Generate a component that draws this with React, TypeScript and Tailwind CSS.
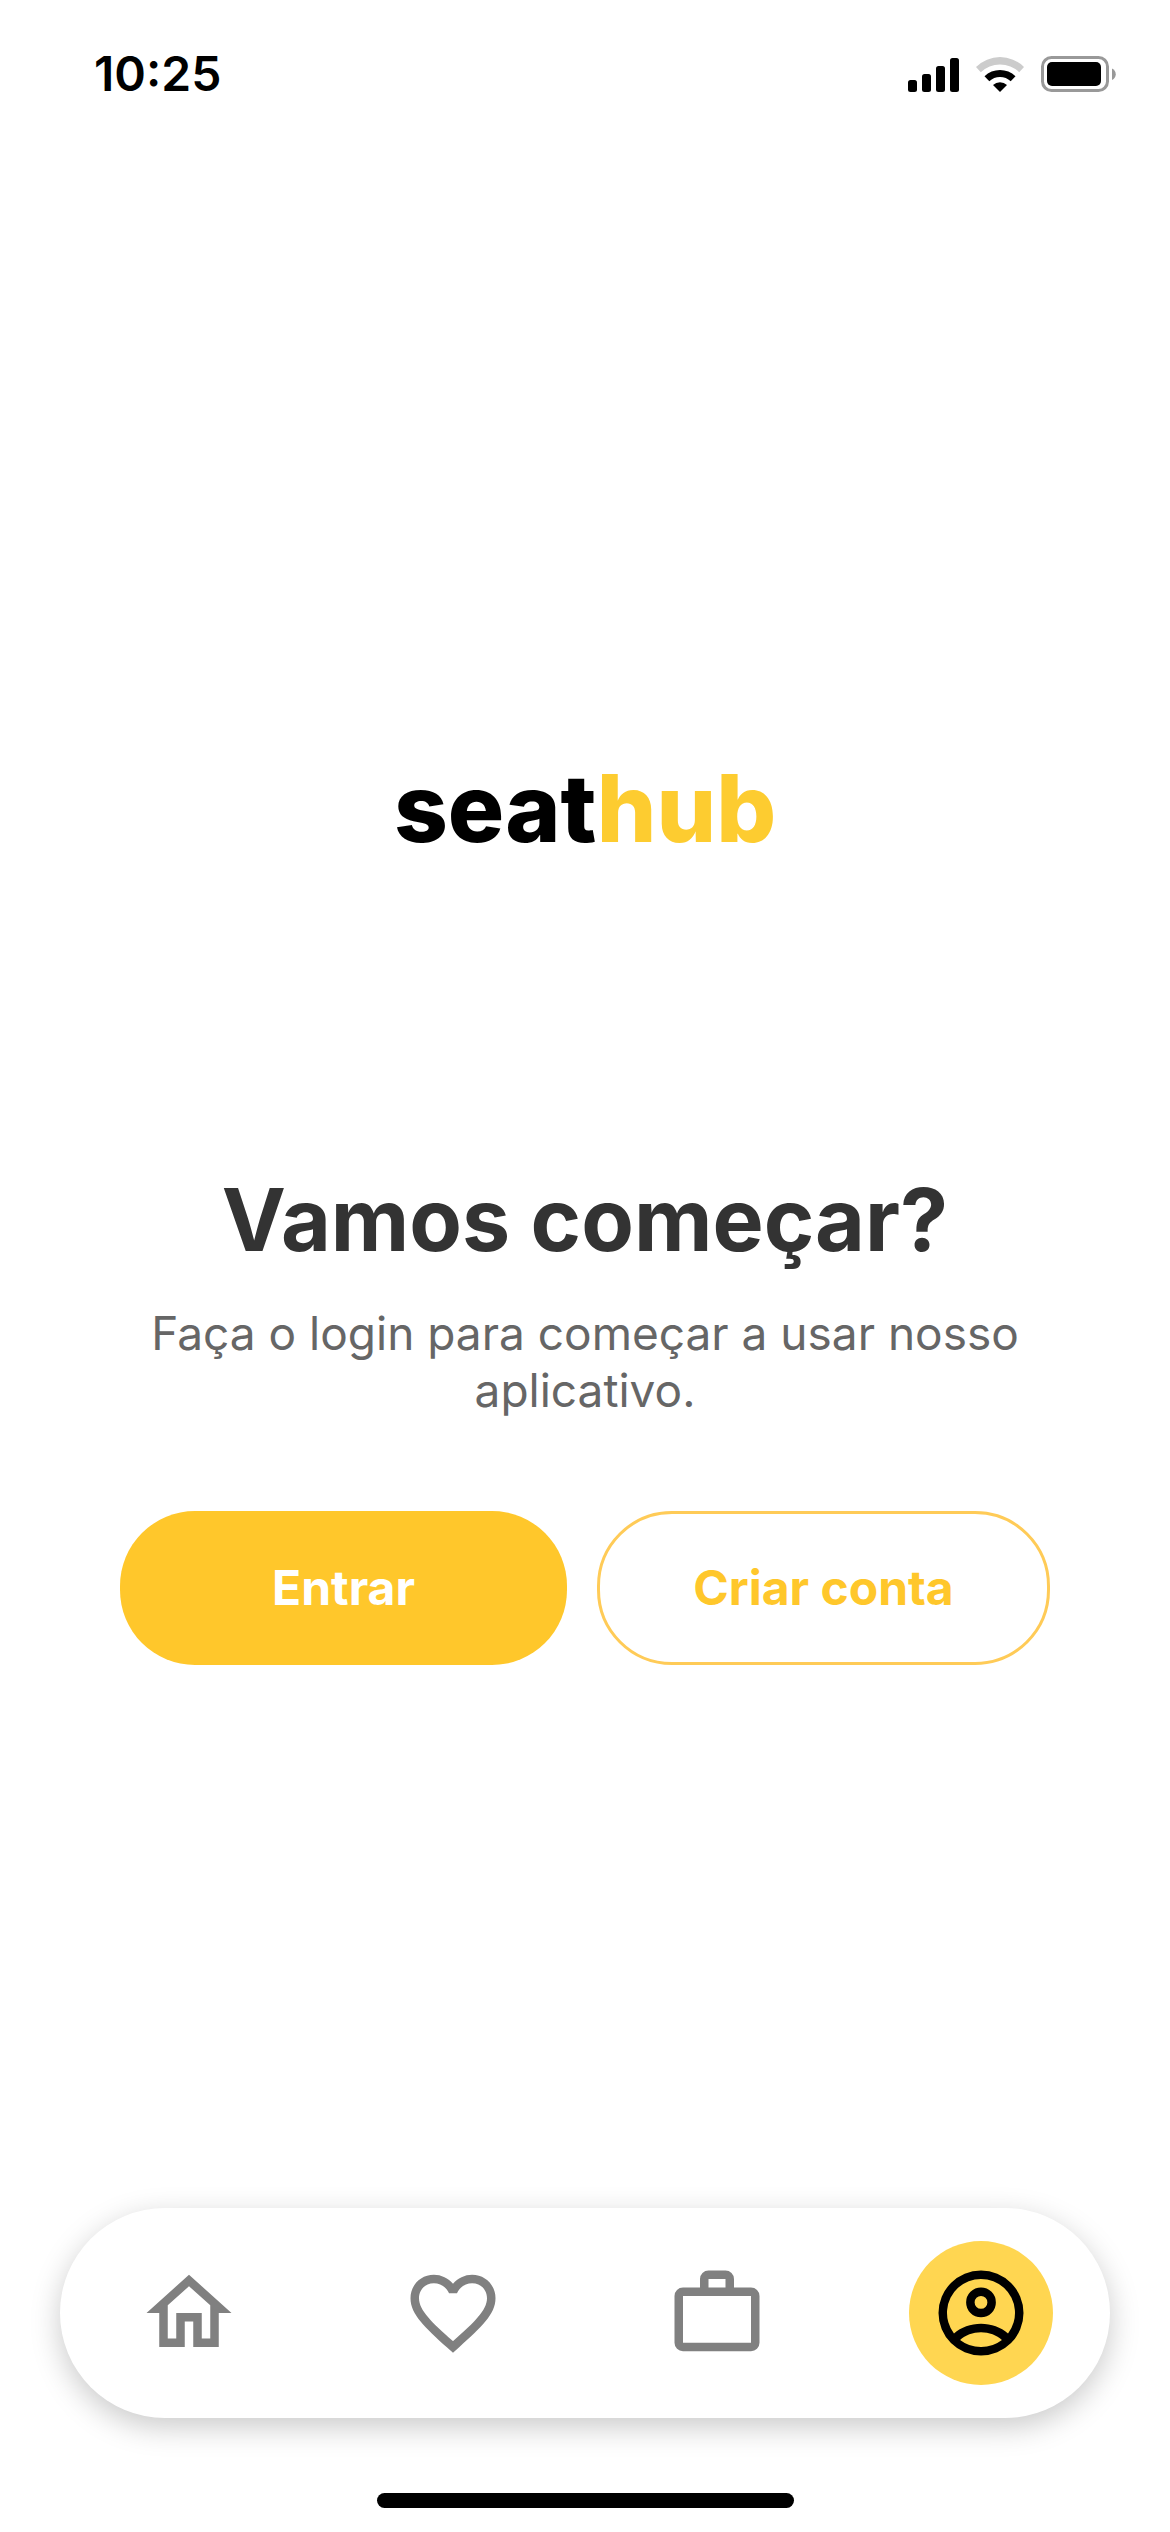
import React from "react";

const paths = {
  home: "M12 5.69l5 4.5V18h-2v-6H9v6H7v-7.81l5-4.5M12 3L2 12h3v8h6v-6h2v6h6v-8h3L12 3z",
  heart:
    "M16.5 3c-1.74 0-3.41.81-4.5 2.09C10.91 3.81 9.24 3 7.5 3 4.42 3 2 5.42 2 8.5c0 3.78 3.4 6.86 8.55 11.54L12 21.35l1.45-1.32C18.6 15.36 22 12.28 22 8.5 22 5.42 19.58 3 16.5 3zm-4.4 15.55l-.1.1-.1-.1C7.14 14.24 4 11.39 4 8.5 4 6.5 5.5 5 7.5 5c1.54 0 3.04.99 3.57 2.36h1.87C13.46 5.99 14.96 5 16.5 5c2 0 3.5 1.5 3.5 3.5 0 2.89-3.14 5.74-7.9 10.05z",
  bag: "M10 2h4a2 2 0 0 1 2 2v2h4a2 2 0 0 1 2 2v11a2 2 0 0 1-2 2H4a2 2 0 0 1-2-2V8a2 2 0 0 1 2-2h4V4a2 2 0 0 1 2-2zM4 8v11h16V8zM10 4v2h4V4z",
  account:
    "M12 2a10 10 0 1 0 0 20 10 10 0 0 0 0-20zM7.07 18.35C8.3 17.15 10.1 16.5 12 16.5s3.7.65 4.93 1.85A8 8 0 0 1 12 20a8 8 0 0 1-4.93-1.65zM18.36 16.83C16.7 15.3 14.4 14.5 12 14.5s-4.7.8-6.36 2.33A8 8 0 1 1 18.36 16.83zM12 6a3.5 3.5 0 1 0 0 7 3.5 3.5 0 0 0 0-7zm0 5a1.5 1.5 0 1 1 0-3 1.5 1.5 0 0 1 0 3z",
};

const tabs = [
  { label: "Início", icon: paths.home, active: false },
  { label: "Favoritos", icon: paths.heart, active: false },
  { label: "Reservas", icon: paths.bag, active: false },
  { label: "Perfil", icon: paths.account, active: true },
];

function StatusBar() {
  return (
    <header className="flex items-center justify-between pt-11 pr-[54px] pl-[94px]">
      <time className="text-[48px] leading-[60px] font-semibold text-black">10:25</time>
      <div className="flex items-center">
        <svg className="h-9 w-[51px]" viewBox="0 0 51 36" aria-label="Sinal">
          <rect x="0" y="24" width="9" height="12" rx="2.5" />
          <rect x="14" y="18" width="9" height="18" rx="2.5" />
          <rect x="28" y="10" width="9" height="26" rx="2.5" />
          <rect x="42" y="2" width="9" height="34" rx="2.5" />
        </svg>
        <svg className="ml-4 h-9 w-[50px]" viewBox="0 0 50 36" aria-label="Wi-Fi">
          <path d="M1 11a34 34 0 0 1 48 0l-4.8 5.2a27.5 27.5 0 0 0-38.4 0z" fill="#ccc" />
          <path d="M9.5 20.2a22.5 22.5 0 0 1 31 0l-4.8 5a15.6 15.6 0 0 0-21.4 0z" />
          <path d="M18 29a10.5 10.5 0 0 1 14 0l-7 7z" />
        </svg>
        <svg className="ml-4 h-9 w-[75px]" viewBox="0 0 75 36" aria-label="Bateria">
          <rect x="1.5" y="1.5" width="65" height="33" rx="9" fill="none" stroke="#999" strokeWidth="3" />
          <rect x="6" y="6" width="54" height="24" rx="5" />
          <path d="M71 12.5c5 2.5 5 9 0 11.5z" fill="#999" />
        </svg>
      </div>
    </header>
  );
}

function TabBar() {
  return (
    <nav className="mx-[60px] flex items-center justify-between rounded-full bg-white px-[57px] py-[33px] shadow-[0_9px_30px_rgba(0,0,0,0.21)]">
      {tabs.map((tab) => (
        <button
          key={tab.label}
          type="button"
          aria-label={tab.label}
          className={
            tab.active
              ? "flex size-36 items-center justify-center rounded-full bg-[#ffd651] text-black"
              : "flex size-36 items-center justify-center rounded-full text-[#808080]"
          }
        >
          <svg className="size-[102px]" viewBox="0 0 24 24" fill="currentColor" fillRule="evenodd" aria-hidden="true">
            <path d={tab.icon} />
          </svg>
        </button>
      ))}
    </nav>
  );
}

export default function App() {
  return (
    <div className="flex min-h-screen flex-col bg-white font-['Inter',sans-serif]">
      <StatusBar />
      <main className="flex flex-1 flex-col px-[120px] pt-[640px] text-center">
        <div className="text-[94px] leading-[128px] font-extrabold text-black">
          seat<span className="text-[#fdcc30]">hub</span>
        </div>
        <h1 className="mt-[294px] text-[86px] leading-[108px] font-bold text-[#333]">Vamos começar?</h1>
        <p className="mt-[31px] text-[46px] leading-[57px] text-[#666]">
          Faça o login para começar a usar nosso aplicativo.
        </p>
        <div className="mt-[92px] flex gap-[30px] text-[48px] leading-[58px] font-bold">
          <button type="button" className="flex-1 rounded-[75px] bg-[#ffc72b] px-10 py-12 text-white">
            Entrar
          </button>
          <button
            type="button"
            className="flex-1 rounded-[75px] border-3 border-[#ffcb57] px-10 py-[45px] text-[#ffc72b]"
          >
            Criar conta
          </button>
        </div>
      </main>
      <footer className="pb-6">
        <TabBar />
        <div className="mx-auto mt-[75px] h-[15px] w-[417px] rounded-full bg-black" />
      </footer>
    </div>
  );
}
